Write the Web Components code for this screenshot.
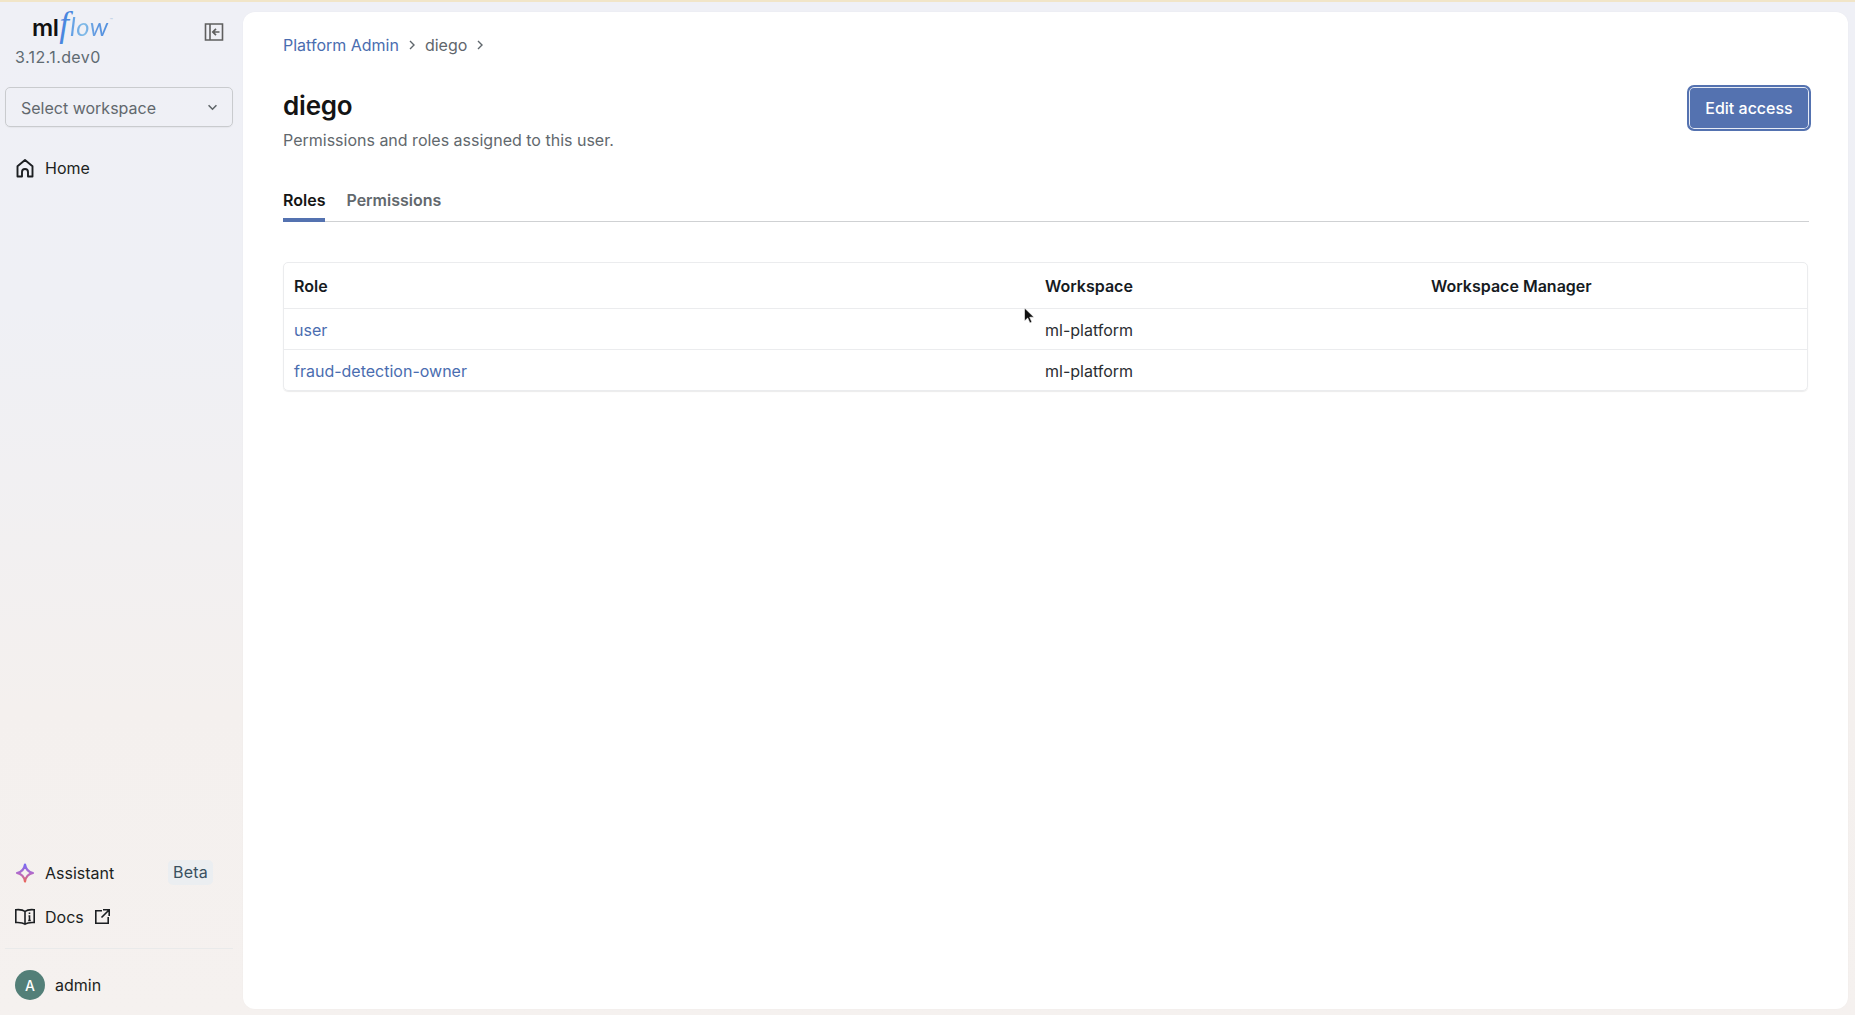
<!DOCTYPE html>
<html><head><meta charset="utf-8">
<style>
html,body{margin:0;height:100%;overflow:hidden}
body{font-family:Inter,"Liberation Sans",sans-serif;color:#161b1f}
</style></head><body>
<template id="t-app"><style>
:host{display:flex;height:1015px;width:1855px;box-sizing:border-box;border-top:2px solid #f1e5c8;background:linear-gradient(180deg,#eff0f6 0%,#eff0f5 30%,#f4f0ee 70%,#f5f1ef 100%);position:relative}
.main{flex:1;min-width:0;margin:10px 7px 6px 0;display:flex}
</style><slot name="side"></slot><div class="main"><slot></slot></div><slot name="over"></slot></template>

<template id="t-side"><style>
:host{display:flex;flex-direction:column;width:243px;flex:none;box-sizing:border-box;padding:0 10px 0 5px}
.head{display:flex;justify-content:space-between;height:85px;flex:none}
.brand{padding:7px 0 0 11px}
.logo{display:flex;align-items:baseline;height:32px;line-height:32px;white-space:nowrap;padding-left:16px}
.ml{font-family:Inter,sans-serif;font-weight:600;color:#111;font-size:23.500px;letter-spacing:-.5px}
.f{font-family:"Liberation Serif",serif;font-style:italic;font-size:35px;color:#4a87df;margin:0 1px 0 1px}
.low{font-family:Lato,sans-serif;font-style:italic;font-weight:400;font-size:25.500px;letter-spacing:.5px;background:linear-gradient(90deg,#5d9be4,#84bde8 35%,#5f97e0 65%,#4f8fdf);-webkit-background-clip:text;background-clip:text;color:transparent;padding-right:1px}
.tm{font-size:5px;color:#a9c2e0;align-self:flex-start;margin-top:7px;line-height:8px}
.ver{font-size:16px;line-height:20px;color:#5f6b72;margin-top:6px;margin-left:-1px;letter-spacing:.4px}
.col{margin:20px 9px 0 0;height:18px;display:flex}
.spacer{flex:1}
.sep{border-top:1px solid #e9eaea;margin-top:10px}
</style><div class="head"><div class="brand"><span class="logo"><span class="ml">ml</span><span class="f">f</span><span class="low">low</span><span class="tm">™</span></span><div class="ver">3.12.1.dev0</div></div>
<div class="col"><svg width="20" height="20" viewBox="0 0 20 20" fill="none" stroke="#5f5f5f" stroke-width="1.600"><path d="M1.500 2h17v16h-17z M6 2v16"/><path d="M15.500 10H9M12 6.800 8.800 10l3.200 3.200" stroke-width="1.700"/></svg></div></div>
<slot name="top"></slot><div class="spacer"></div><slot name="bottom"></slot><div class="sep"></div><slot name="foot"></slot></template>

<template id="t-select"><style>
:host{display:flex;align-items:center;justify-content:space-between;height:40px;box-sizing:border-box;border:1px solid #c9cbce;border-radius:5px;padding:1px 14px 0 15px;font-size:16px;color:#62686d;width:228px;box-shadow:0 1px 1px rgba(0,0,0,.04)}
</style><slot></slot><svg width="11" height="7" viewBox="0 0 12 8" fill="none" stroke="#5e6468" stroke-width="1.800"><path d="M1.500 1.500 6 6l4.500-4.500"/></svg></template>

<template id="t-nav"><style>
:host{display:flex;align-items:center;font-size:16px;color:#1c1f22;height:44px;padding-left:10px}
.i{width:20px;height:20px;margin-right:10px;display:flex;align-items:center;justify-content:center;flex:none}
</style><span class="i"><slot name="icon"></slot></span><slot></slot><slot name="after"></slot></template>

<template id="t-badge"><style>
:host{display:inline-flex;align-items:center;justify-content:center;width:45px;height:25px;background:#ebeef1;border-radius:5px;color:#3a5160;font-size:16px;letter-spacing:.2px}
</style><slot></slot></template>

<template id="t-user"><style>
:host{display:flex;align-items:center;font-size:16px;color:#1c1f22;height:66px;padding:6px 0 0 10px;box-sizing:border-box;gap:10px}
.a{width:30px;height:30px;border-radius:50%;background:#537f78;color:#fff;font-size:14px;display:flex;align-items:center;justify-content:center;font-weight:500}
</style><span class="a">A</span><slot></slot></template>

<template id="t-page"><style>
:host{display:flex;flex-direction:column;flex:1;min-width:0;background:#fff;border-radius:12px;padding:23px 39px 0 40px;box-sizing:border-box;box-shadow:0 0 2px rgba(0,0,0,.03)}
</style><slot></slot></template>

<template id="t-crumbs"><style>
:host{display:flex;align-items:center;height:20px;font-size:16px;color:#5f666c}
::slotted(a){color:#4a6db0}
svg{margin:0 10px 0 10px}
</style><slot name="a"></slot><svg width="6" height="10" viewBox="0 0 6 10" fill="none" stroke="#5f666c" stroke-width="1.400"><path d="M1 1l4 4-4 4"/></svg><slot name="b"></slot><svg width="6" height="10" viewBox="0 0 6 10" fill="none" stroke="#5f666c" stroke-width="1.400"><path d="M1 1l4 4-4 4"/></svg></template>

<template id="t-header"><style>
:host{display:flex;justify-content:space-between;margin-top:30px}
.txt{padding-top:3px}
h1{margin:0;font-size:26px;line-height:36px;font-weight:600;color:#141414;letter-spacing:-.2px}
p{margin:0;font-size:16px;line-height:20px;color:#62686d;margin-top:6px}
.act{margin:0 -2px 0 0}
</style><div class="txt"><h1><slot name="title"></slot></h1><p><slot name="sub"></slot></p></div><div class="act"><slot name="action"></slot></div></template>

<template id="t-button"><style>
:host{display:flex;align-items:center;justify-content:center;width:124px;height:46px;box-sizing:border-box;background:#5472b0;border-radius:7px;color:#fff;font-size:16px;font-weight:500;border:2px solid #5472b0;box-shadow:inset 0 0 0 1px #e6ebf5}
</style><slot></slot></template>

<template id="t-tabs"><style>
:host{display:flex;gap:21px;margin-top:26px;border-bottom:1px solid #cfd1d3;height:46px;box-sizing:border-box;font-size:16px}
</style><slot></slot></template>

<template id="t-tab"><style>
:host{display:flex;align-items:center;height:46px;box-sizing:border-box;font-weight:600;color:#62686d;padding-top:5px;border-bottom:4px solid transparent}
:host([active]){color:#141414;border-bottom-color:#5472b0}
</style><slot></slot></template>

<template id="t-table"><style>
:host{display:block;margin-top:40px;border:1px solid #ebecee;border-radius:5px;margin-right:1px;box-shadow:0 1px 1px rgba(0,0,0,.08)}
</style><slot></slot></template>

<template id="t-row"><style>
:host{display:grid;grid-template-columns:751px 386px 1fr;font-size:16px;color:#2a2e32;align-items:center;height:41px;border-top:1px solid #ebecee;box-sizing:border-box;padding:2px 0 0 10px}
:host([head]){border-top:0;height:45px;font-weight:600;color:#161b1f;padding-top:0}
::slotted(a){color:#4a6db0}
</style><slot></slot></template>

<script>
for(const [n,t] of [['m-app','t-app'],['m-side','t-side'],['m-select','t-select'],['m-nav','t-nav'],['m-badge','t-badge'],['m-user','t-user'],['m-page','t-page'],['m-crumbs','t-crumbs'],['m-header','t-header'],['m-button','t-button'],['m-tabs','t-tabs'],['m-tab','t-tab'],['m-table','t-table'],['m-row','t-row']]){
 customElements.define(n,class extends HTMLElement{constructor(){super();this.attachShadow({mode:'open'}).appendChild(document.getElementById(t).content.cloneNode(true));}});
}
</script>

<m-app>
 <m-side slot="side">
  <m-select slot="top">Select workspace</m-select>
  <m-nav slot="top" style="margin-top:19px"><svg slot="icon" width="20" height="20" viewBox="0 0 20 20" fill="none" stroke="#1c1f22" stroke-width="1.900" stroke-linejoin="round"><path d="M2.500 18.500V8.300L10 2l7.500 6.300v10.200h-4.500v-4.500a3 3 0 0 0-6 0v4.500z"/></svg>Home</m-nav>
  <m-nav slot="bottom"><svg slot="icon" width="20" height="20" viewBox="0 0 20 20" fill="none"><defs><linearGradient id="g" x1="0" y1="0" x2="0" y2="1"><stop offset="0" stop-color="#7b6bf0"/><stop offset=".55" stop-color="#b56ac8"/><stop offset="1" stop-color="#e8665f"/></linearGradient></defs><path d="M10 1.500C10.800 6.500 13.500 9.200 18 10c-4.500.8-7.200 3.500-8 8.500C9.200 13.500 6.500 10.800 2 10c4.500-.8 7.200-3.500 8-8.500z" stroke="url(#g)" stroke-width="2.200" stroke-linejoin="round"/></svg><span style="flex:1">Assistant</span><m-badge slot="after" style="margin-right:20px;margin-top:-2px">Beta</m-badge></m-nav>
  <m-nav slot="bottom" style="height:43px"><svg slot="icon" width="20" height="18" viewBox="0 0 20 18" fill="none" stroke="#1c1f22" stroke-width="1.600"><path d="M10 3.500C8 1.800 4 1.500 .8 1.800V14.500c3-.2 7 0 9.200 1.700 2.200-1.700 6.200-1.900 9.200-1.700V1.800C16 1.500 12 1.800 10 3.500zM10 3.500v12.700"/><path d="M14.500 4.500v1.500M13.500 8h1v4.500M13.200 12.500h2.600"/></svg><span>Docs</span><svg slot="after" style="margin-left:11px" width="15" height="15" viewBox="0 0 15 15" fill="none" stroke="#1c1f22" stroke-width="1.600"><path d="M7 1.800H.8v12.400h12.400V8M8 .8h6.200V7M14 1 6.500 8.500"/></svg></m-nav>
  <m-user slot="foot">admin</m-user>
 </m-side>
 <m-page>
  <m-crumbs><a slot="a">Platform Admin</a><span slot="b">diego</span></m-crumbs>
  <m-header><span slot="title">diego</span><span slot="sub">Permissions and roles assigned to this user.</span><m-button slot="action">Edit access</m-button></m-header>
  <m-tabs><m-tab active>Roles</m-tab><m-tab>Permissions</m-tab></m-tabs>
  <m-table>
   <m-row head><span>Role</span><span>Workspace</span><span>Workspace Manager</span></m-row>
   <m-row><a>user</a><span>ml-platform</span><span></span></m-row>
   <m-row><a>fraud-detection-owner</a><span>ml-platform</span><span></span></m-row>
  </m-table>
 </m-page>
 <svg slot="over" style="position:absolute;left:1023px;top:305px" width="12" height="18" viewBox="0 0 12 18"><path d="M1.500 1v13l3.200-3 2.200 5 2-.9-2.200-4.900H11z" fill="#111" stroke="#fff" stroke-width=".6"/></svg>
</m-app>
</body></html>
